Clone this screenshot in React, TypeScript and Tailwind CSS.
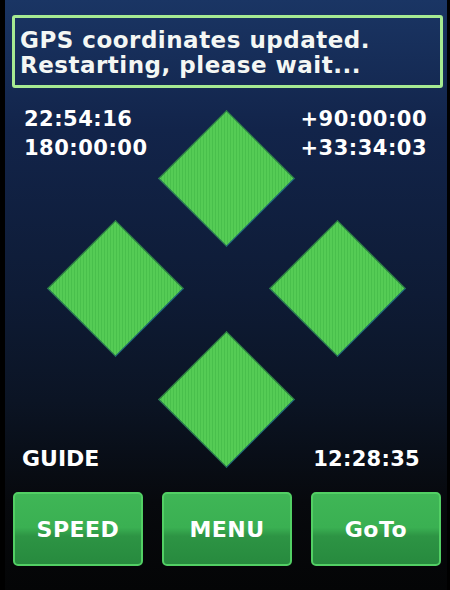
const font = { fontFamily: '"DejaVu Sans", Verdana, sans-serif' };

function Diamond() {
  return (
    <div className="w-[97px] h-[97px] rotate-45 border-[1.5px] border-[#2e8a44] border-r-[#1d6f86] border-b-[#2a7d5a] bg-[repeating-linear-gradient(45deg,#55cc55_0px,#55cc55_2px,#49c04c_2px,#49c04c_3px)]" />
  );
}

function NavButton({ label }: { label: string }) {
  return (
    <button className="w-[130px] h-[74px] rounded-[5px] border-2 border-[#52cf64] bg-[linear-gradient(to_bottom,#3fb656_0%,#3ab052_48%,#2d9444_60%,#278a3e_100%)] text-white text-[22px] font-bold tracking-[0.5px]">
      {label}
    </button>
  );
}

export default function App() {
  return (
    <div
      style={font}
      className="w-[450px] h-[590px] overflow-hidden border-l-[5px] border-r-[3px] border-black bg-[linear-gradient(to_bottom,#1a3564_0%,#12244a_22%,#0e1b35_50%,#0b1424_68%,#07090d_85%,#040506_100%)] text-white font-bold"
    >
      <div className="pt-[15px] pl-[7px] pr-[4px]">
        <div className="h-[73px] border-[3px] border-[#a6ea92] rounded-[3px] pl-[5px] pt-[10px] text-[23px] leading-[25px] tracking-[0.5px] text-[#f4f7f4]">
          <div>GPS coordinates updated.</div>
          <div>Restarting, please wait...</div>
        </div>
      </div>

      <div className="mt-[17px] flex justify-between pl-[19px] pr-[20px] text-[21px] leading-[29px] tracking-[0.5px]">
        <div>
          <div>22:54:16</div>
          <div>180:00:00</div>
        </div>
        <div>
          <div>+90:00:00</div>
          <div>+33:34:03</div>
        </div>
      </div>

      <div className="-mt-[40px] ml-[55px] grid grid-cols-[111px_111px_111px] grid-rows-[110px_111px_110px]">
        <div />
        <div className="flex items-center justify-center"><Diamond /></div>
        <div />
        <div className="flex items-center justify-center"><Diamond /></div>
        <div />
        <div className="flex items-center justify-center"><Diamond /></div>
        <div />
        <div className="flex items-center justify-center"><Diamond /></div>
        <div />
      </div>

      <div className="-mt-[8px] flex justify-between pl-[17px] pr-[27px] leading-[26px]">
        <div className="text-[22px]">GUIDE</div>
        <div className="text-[21px] tracking-[0.3px]">12:28:35</div>
      </div>

      <div className="mt-[20px] ml-[8px] flex gap-[19px]">
        <NavButton label="SPEED" />
        <NavButton label="MENU" />
        <NavButton label="GoTo" />
      </div>
    </div>
  );
}
